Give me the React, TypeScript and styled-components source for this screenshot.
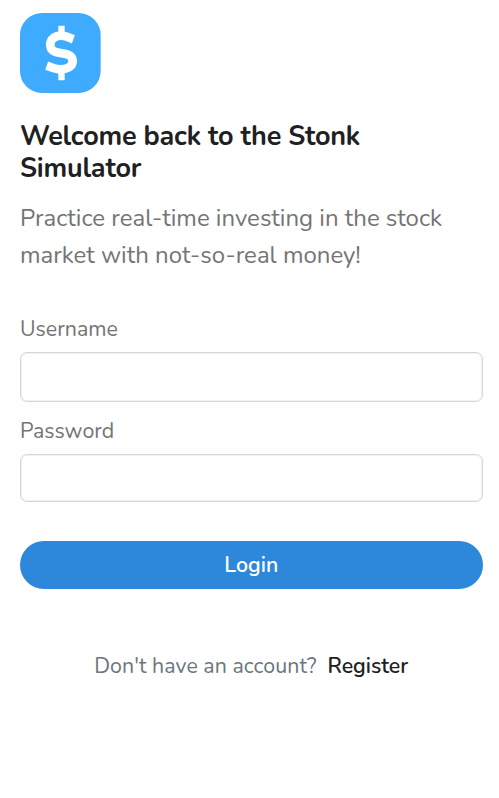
import React from "react";
import styled, { createGlobalStyle } from "styled-components";

const GlobalStyle = createGlobalStyle`
  *, *::before, *::after { box-sizing: border-box; }
  body {
    margin: 0;
    background: #fff;
    font-family: Nunito, Lato, "Open Sans", sans-serif;
  }
`;

const Page = styled.main`
  display: flex;
  flex-direction: column;
  min-height: 798px;
  padding: 13px 16.5px 0 20px;
`;

const Logo = styled.svg`
  display: block;
  width: 81px;
  height: 80px;
`;

const Title = styled.h1`
  margin: 28px 0 0;
  color: #1f2022;
  font-size: 27px;
  font-weight: 700;
  line-height: 32px;
  letter-spacing: -0.2px;
`;

const Intro = styled.p`
  margin: 15px 0 0;
  color: #747474;
  font-size: 24px;
  line-height: 37px;
`;

const Form = styled.form`
  display: flex;
  flex-direction: column;
  margin-top: 39px;
`;

const Label = styled.label`
  height: 39px;
  color: #747474;
  font-size: 21.33px;
  line-height: 32px;
`;

const Input = styled.input<{ $height: number }>`
  width: 100%;
  height: ${({ $height }) => $height}px;
  margin: 0 0 13px;
  padding: 0 16px;
  border: 1px solid #d3d7dd;
  border-radius: 7px;
  background: #fff;
  box-shadow: inset 0 0 0 1px #f0f2f4;
  font: inherit;
  font-size: 21.33px;
  outline: none;
`;

const Button = styled.button`
  height: 48px;
  margin-top: 26.4px;
  padding: 0 0 1px;
  border: 0;
  border-radius: 24px;
  background: #2d87da;
  color: #fff;
  font: inherit;
  font-size: 21.33px;
  font-weight: 650;
  line-height: 32px;
`;

const Footer = styled.p`
  display: flex;
  justify-content: center;
  gap: 11px;
  margin: 60.6px 0 0;
  color: #6c757d;
  font-size: 21.33px;
  line-height: 32px;
  letter-spacing: 0.06px;
  white-space: nowrap;
`;

const Register = styled.a`
  color: #1f2022;
  font-weight: 650;
  letter-spacing: 0;
  text-decoration: none;
`;

export default function App() {
  return (
    <>
      <GlobalStyle />
      <Page>
        <Logo viewBox="0 0 243 240" preserveAspectRatio="none" aria-label="Stonk Simulator">
          <rect width="242" height="240" rx="66" fill="#3eabff" />
          <path d="M115 38h19v28h-19zM115 170h19v32h-19z" fill="#fff" />
          <path
            d="M160 79C149 75 139 68 125 68C106 68 91 78 91 95C91 136 158 106 158 145C158 161 141 169 120 169C105 169 94 163 80 158"
            fill="none"
            stroke="#fff"
            strokeWidth="26"
          />
        </Logo>
        <Title>
          Welcome back to the Stonk
          <br />
          Simulator
        </Title>
        <Intro>
          Practice real-time investing in the stock
          <br />
          market with not-so-real money!
        </Intro>
        <Form onSubmit={(event) => event.preventDefault()}>
          <Label htmlFor="username">Username</Label>
          <Input id="username" type="text" $height={50} />
          <Label htmlFor="password">Password</Label>
          <Input id="password" type="password" $height={48} />
          <Button type="submit">Login</Button>
        </Form>
        <Footer>
          <span>Don't have an account?</span>
          <Register href="#">Register</Register>
        </Footer>
      </Page>
    </>
  );
}
